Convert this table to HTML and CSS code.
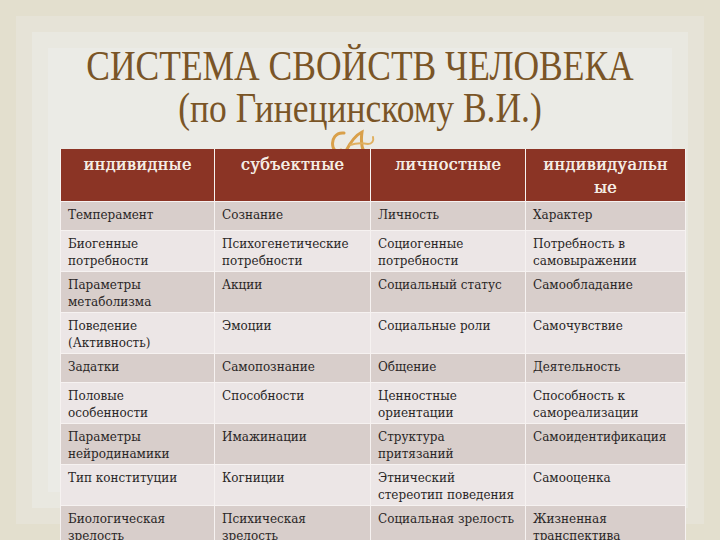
FILE: index.html
```html
<!DOCTYPE html>
<html lang="ru">
<head>
<meta charset="utf-8">
<title>Система свойств человека</title>
<link rel="stylesheet" href="styles.css">
</head>
<body>
<div class="slide">
  <h1 class="title">
    <span class="line">СИСТЕМА СВОЙСТВ ЧЕЛОВЕКА</span>
    <span class="line">(по Гинецинскому В.И.)</span>
  </h1>
  <svg class="ornament" width="50" height="24" viewBox="0 0 50 24">
    <path d="M16 4 C8 3 3 10 5 18 C6 22 10 23 13 21" fill="none" stroke="#d9a04a" stroke-width="3" stroke-linecap="round"/>
    <path d="M18 22 C22 14 28 6 34 3 C33 10 33 17 36 23" fill="none" stroke="#d9a04a" stroke-width="3" stroke-linecap="round"/>
    <path d="M22 16 C28 14 34 14 40 15 C44 15 46 12 45 8" fill="none" stroke="#e0b060" stroke-width="2" stroke-linecap="round"/>
  </svg>
  <table class="props">
    <colgroup>
      <col class="c1"><col class="c2"><col class="c3"><col class="c4">
    </colgroup>
    <thead>
      <tr>
        <th>индивидные</th>
        <th>субъектные</th>
        <th>личностные</th>
        <th>индивидуальн<br>ые</th>
      </tr>
    </thead>
    <tbody>
      <tr class="dark short"><td>Темперамент</td><td>Сознание</td><td>Личность</td><td>Характер</td></tr>
      <tr class="light"><td>Биогенные потребности</td><td>Психогенетические потребности</td><td>Социогенные потребности</td><td>Потребность в самовыражении</td></tr>
      <tr class="dark"><td>Параметры метаболизма</td><td>Акции</td><td>Социальный статус</td><td>Самообладание</td></tr>
      <tr class="light"><td>Поведение (Активность)</td><td>Эмоции</td><td>Социальные роли</td><td>Самочувствие</td></tr>
      <tr class="dark short"><td>Задатки</td><td>Самопознание</td><td>Общение</td><td>Деятельность</td></tr>
      <tr class="light"><td>Половые особенности</td><td>Способности</td><td>Ценностные ориентации</td><td>Способность к самореализации</td></tr>
      <tr class="dark"><td>Параметры нейродинамики</td><td>Имажинации</td><td>Структура притязаний</td><td>Самоидентификация</td></tr>
      <tr class="light"><td>Тип конституции</td><td>Когниции</td><td>Этнический стереотип поведения</td><td>Самооценка</td></tr>
      <tr class="dark"><td>Биологическая зрелость</td><td>Психическая зрелость</td><td>Социальная зрелость</td><td>Жизненная транспектива</td></tr>
    </tbody>
  </table>
</div>
</body>
</html>
```

FILE: styles.css
```css
html, body {
  margin: 0;
  padding: 0;
}
body {
  width: 720px;
  height: 540px;
  overflow: hidden;
}
.slide {
  position: relative;
  width: 720px;
  height: 540px;
  overflow: hidden;
  background: #ebebe6;
  box-shadow:
    inset 0 0 0 16px #e3dfce,
    inset 0 0 0 32px #e6e3d7,
    inset 0 0 0 48px #e9e8e0;
  box-sizing: border-box;
  padding-top: 45px;
}
.title {
  margin: 0;
  font-family: "Liberation Serif", "Times New Roman", serif;
  font-weight: normal;
  font-size: 42px;
  line-height: 42px;
  color: #7a5527;
  text-align: center;
  transform: scaleX(0.845);
  transform-origin: 360px 0;
}
.title .line {
  display: block;
}
.ornament {
  position: absolute;
  left: 328px;
  top: 129px;
}
.props {
  position: relative;
  margin: 20px 0 0 60px;
  width: 625px;
  border-collapse: collapse;
  table-layout: fixed;
  font-family: "DejaVu Serif", "Liberation Serif", serif;
}
.c1 { width: 154px; }
.c2 { width: 156px; }
.c3 { width: 155px; }
.c4 { width: 160px; }
.props th {
  background: #8b3425;
  color: #f4ece4;
  font-weight: normal;
  font-size: 16px;
  letter-spacing: 0.4px;
  text-shadow: 0.5px 0 0 #f4ece4;
  line-height: 23px;
  height: 50px;
  padding: 4px 4px 2px;
  vertical-align: top;
  text-align: center;
  border: 1.5px solid #f6f2f1;
  border-top: none;
  box-sizing: border-box;
}
.props td {
  font-size: 12px;
  line-height: 17px;
  color: #2a2626;
  padding: 5px 7px 1px;
  vertical-align: top;
  border: 1.5px solid #f6f2f1;
  height: 41px;
  box-sizing: border-box;
}
.props tr.short td {
  height: 29px;
}
.props tr.dark td {
  background: #d8cecb;
}
.props tr.light td {
  background: #ece6e6;
}
```
